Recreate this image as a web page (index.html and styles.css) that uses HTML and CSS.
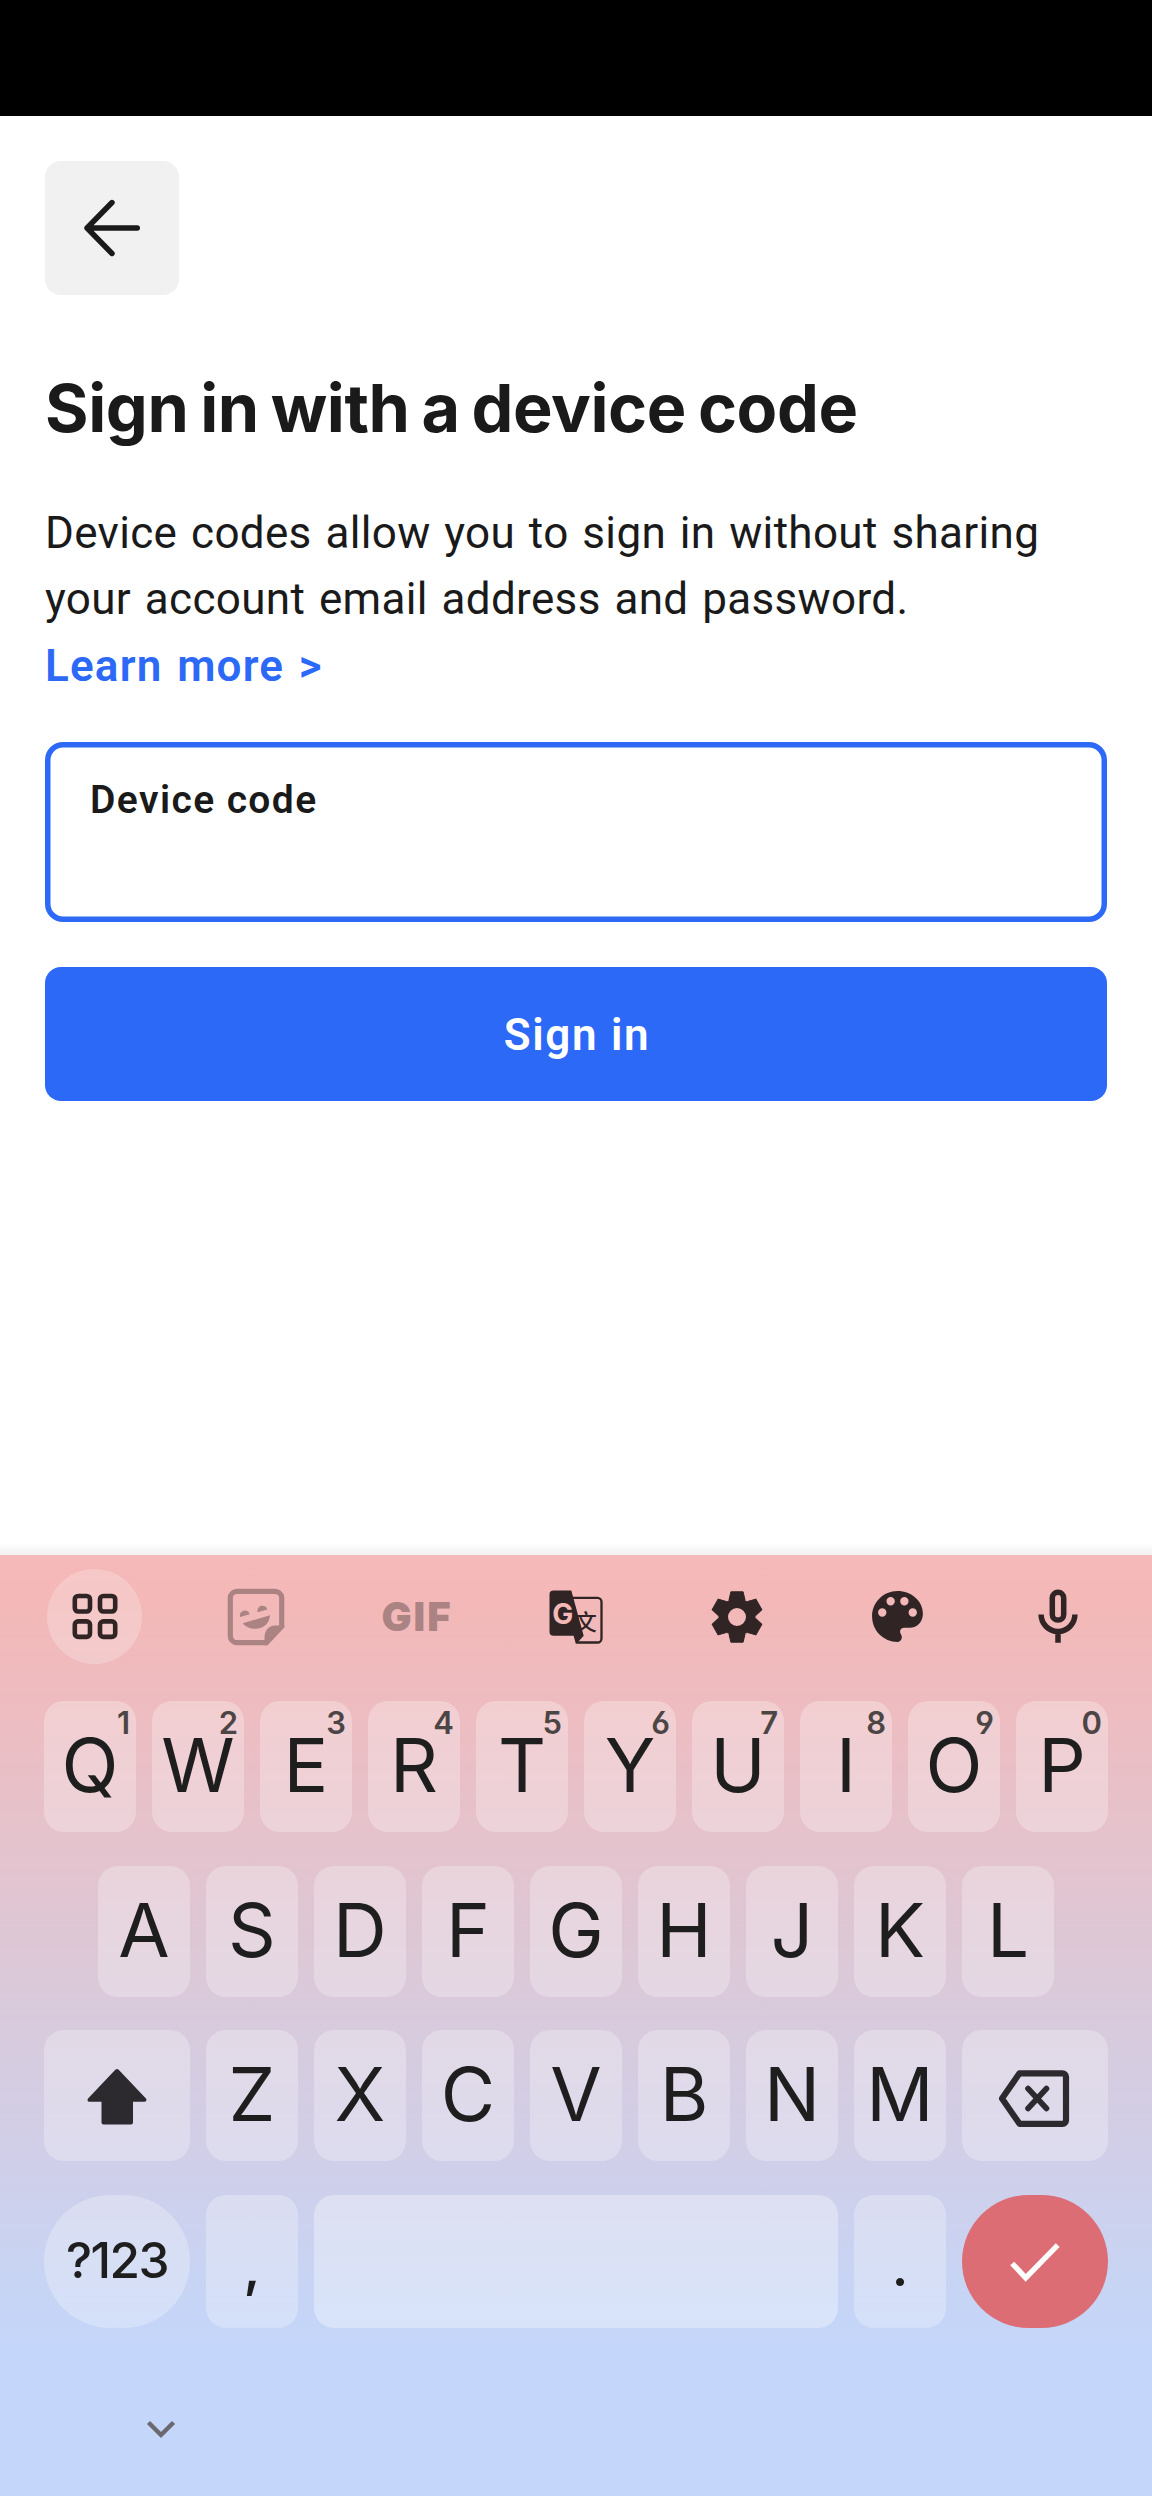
FILE: index.html
```html
<!DOCTYPE html>
<html lang="en">
<head>
<meta charset="utf-8">
<title>Sign in with a device code</title>
<link rel="stylesheet" href="styles.css">
</head>
<body>
<div class="status"></div>

<main class="page">
  <button class="back" aria-label="Back">
    <svg width="64" height="64" viewBox="-32 -32 64 64" fill="none" stroke="#1a1a1a" stroke-width="5.4" stroke-linecap="round" stroke-linejoin="round"><path d="M0-25.5-25 0 0 25.5M-25 0H25.300"/></svg>
  </button>
  <h1 class="title">Sign in with a device code</h1>
  <p class="copy">Device codes allow you to sign in without sharing<br>your account email address and password.<br><a class="link">Learn more &gt;</a></p>
  <div class="field"><label class="label">Device code</label></div>
  <button class="submit">Sign in</button>
</main>

<section class="keyboard">
  <div class="tools">
    <div class="tool tool-apps">
      <svg width="60" height="60" viewBox="0 0 60 60" fill="none" stroke="#302424" stroke-width="4.6"><rect x="9.800" y="9" width="15.200" height="15.500" rx="3.400"/><rect x="35" y="9" width="15.200" height="15.500" rx="3.400"/><rect x="9.800" y="34.400" width="15.200" height="15.500" rx="3.400"/><rect x="35" y="34.400" width="15.200" height="15.500" rx="3.400"/></svg>
    </div>
    <div class="tool">
      <svg width="60" height="60" viewBox="-1 0 60 60" fill="#ab8383"><path d="M41 55.700H11a6.700 6.700 0 0 1-6.700-6.700V11A6.700 6.700 0 0 1 11 4.300H49A6.700 6.700 0 0 1 55.700 11V40" fill="none" stroke="#ab8383" stroke-width="5.200"/><path d="M58.300 40.500 41.600 58.200H38.500V50C38.500 43.500 43 38.500 49 38.500H58.300Z"/><path d="M14 30A5 5.100 0 1 1 23.700 27.200Z"/><path d="M31.600 25.200A5 5.100 0 1 1 41.300 22.400Z"/><path d="M16.700 36.200 44 28.200C43.600 36 37.500 41.700 29.500 41.700 24 41.700 19.300 39.700 16.700 36.200Z"/></svg>
    </div>
    <div class="tool gif">GIF</div>
    <div class="tool">
      <svg width="60" height="60" viewBox="0 0 60 60"><path d="M26 10.800H51.500A4 4 0 0 1 55.500 14.800V51.500A4 4 0 0 1 51.500 55.500H31" fill="none" stroke="#302424" stroke-width="2.300"/><path d="M7.500 3.500H25.300L37.700 48.700 30 57.200 27.600 48.700H7.500A4 4 0 0 1 3.500 44.700V7.500A4 4 0 0 1 7.500 3.500Z" fill="#302424"/><text class="glyph-g" x="16.800" y="36.500" text-anchor="middle">G</text><text class="glyph-cjk" x="39.800" y="42.500" text-anchor="middle">文</text></svg>
    </div>
    <div class="tool">
      <svg width="60" height="60" viewBox="-30 -30 60 60" fill="#302424"><defs><path id="cog" d="M-8-17-6.100-25.200H6.100L8-17Z" stroke="#302424" stroke-width="1" stroke-linejoin="round"/></defs><circle r="13.800" fill="none" stroke="#302424" stroke-width="9.600"/><use href="#cog"/><use href="#cog" transform="rotate(60)"/><use href="#cog" transform="rotate(120)"/><use href="#cog" transform="rotate(180)"/><use href="#cog" transform="rotate(240)"/><use href="#cog" transform="rotate(300)"/></svg>
    </div>
    <div class="tool">
      <svg width="61" height="61" viewBox="0 0 24 24" fill="#302424"><path fill-rule="evenodd" d="M12 22C6.490 22 2 17.510 2 12S6.490 2 12 2s10 4 10 8.900c0 3.100-2.200 5.500-5.200 5.500h-2.100c-1 0-1.700.600-1.700 1.500 0 .900.700 1.300.700 2.200C13.700 21.200 13 22 12 22zM6 12.100a1.650 1.650 0 1 0 0-3.300 1.650 1.650 0 0 0 0 3.300zM9.300 7.650a1.650 1.650 0 1 0 0-3.300 1.650 1.650 0 0 0 0 3.300zM14.700 7.650a1.650 1.650 0 1 0 0-3.300 1.650 1.650 0 0 0 0 3.300zM18 12.100a1.650 1.650 0 1 0 0-3.300 1.650 1.650 0 0 0 0 3.300z"/></svg>
    </div>
    <div class="tool">
      <svg width="60" height="60" viewBox="-30 -2.500 60 60" fill="none" stroke="#302424" stroke-width="5.500"><rect x="-5.700" y="2.700" width="11.400" height="27.900" rx="5.700"/><path d="M-16.900 25A16.900 16.900 0 0 0 16.900 25M0 42V53.300"/></svg>
    </div>
  </div>

  <div class="rows">
    <div class="row">
      <div class="key">Q<sup>1</sup></div><div class="key">W<sup>2</sup></div><div class="key">E<sup>3</sup></div><div class="key">R<sup>4</sup></div><div class="key">T<sup>5</sup></div><div class="key">Y<sup>6</sup></div><div class="key">U<sup>7</sup></div><div class="key">I<sup>8</sup></div><div class="key">O<sup>9</sup></div><div class="key">P<sup>0</sup></div>
    </div>
    <div class="row">
      <div class="key">A</div><div class="key">S</div><div class="key">D</div><div class="key">F</div><div class="key">G</div><div class="key">H</div><div class="key">J</div><div class="key">K</div><div class="key">L</div>
    </div>
    <div class="row">
      <div class="key wide"><svg width="64" height="64" viewBox="-32 -32 64 64" fill="#2d2a2f" stroke="#2d2a2f" stroke-width="4" stroke-linejoin="round"><path d="M0-25-27.500 3.800H-13.500V26.500H14V3.800H27.500Z"/></svg></div>
      <div class="key">Z</div><div class="key">X</div><div class="key">C</div><div class="key">V</div><div class="key">B</div><div class="key">N</div><div class="key">M</div>
      <div class="key wide"><svg width="76" height="64" viewBox="-38 -32 76 64" fill="none" stroke="#2d2a2f" stroke-width="6.200" stroke-linejoin="round"><path d="M-15.500-22.700H27.500A3.500 3.500 0 0 1 31 -19.200V24.300A3.500 3.500 0 0 1 27.500 27.800H-15.500L-33 2.500Z"/><path d="M-7-7.500 11.500 12.500M11.500-7.500-7 12.500" stroke-width="5.600" stroke-linecap="round"/></svg></div>
    </div>
    <div class="row row-last">
      <div class="key wide round mode">?123</div>
      <div class="key mark">,</div>
      <div class="key space"></div>
      <div class="key mark">.</div>
      <div class="key wide round enter"><svg width="60" height="60" viewBox="-30 -30 60 60" fill="none" stroke="#fff" stroke-width="5.400"><path d="M-22.800 2.500-9.300 16.800 22.700-15.800"/></svg></div>
    </div>
  </div>
  <div class="nav"><svg width="40" height="30" viewBox="-20 -15 40 30" fill="none" stroke="#6a6a6e" stroke-width="4.400"><path d="M-12.500-6.500 0 6 12.500-6.500"/></svg></div>
</section>
</body>
</html>
```
FILE: styles.css
```css
* { box-sizing: border-box; }
body {
  margin: 0;
  width: 1152px;
  height: 2496px;
  overflow: hidden;
  display: flex;
  flex-direction: column;
  background: #fff;
  color: #1a1a1a;
  font-family: Roboto, "Liberation Sans", sans-serif;
}
button { border: 0; padding: 0; font: inherit; }
svg { display: block; flex: none; }

.status { height: 116px; background: #000; flex: none; }

.page {
  height: 1439px;
  flex: none;
  padding: 45px 45px 0;
  display: flex;
  flex-direction: column;
  background: linear-gradient(#fff, #fff calc(100% - 12px), #f1f1f1);
}
.back {
  width: 134px;
  height: 134px;
  border-radius: 16px;
  background: #f1f1f1;
  display: flex;
  align-items: center;
  justify-content: center;
}
.title {
  margin: 73px 0 0;
  font: 700 66.5px/80px Inter, sans-serif;
  letter-spacing: -.4px;
  word-spacing: -3.500px;
  white-space: nowrap;
}
.copy {
  margin: 51.5px 0 0;
  font-size: 44px;
  line-height: 66.5px;
  letter-spacing: .33px;
  word-spacing: 2.500px;
  white-space: nowrap;
}
.link { color: #2b69f6; font-weight: 600; letter-spacing: 1.200px; }
.field {
  margin-top: 42.500px;
  height: 180.500px;
  box-shadow: inset 0 0 0 5.500px #2b69f6;
  border-radius: 18px;
  padding: 35px 0 0 45px;
}
.label {
  display: block;
  font-size: 39px;
  line-height: 46px;
  font-weight: 600;
  letter-spacing: 1.400px;
}
.submit {
  margin-top: 44.500px;
  height: 134.500px;
  padding: 3px 0 0 2px;
  border-radius: 16px;
  background: #2b69f6;
  color: #fff;
  font-size: 44px;
  font-weight: 600;
  letter-spacing: 1.700px;
}

.keyboard {
  height: 941px;
  flex: none;
  padding: 14px 44px 0;
  display: flex;
  flex-direction: column;
  color: #1e1e1e;
  font-family: Inter, sans-serif;
  background: linear-gradient(#f4b9b8 0, #f3b8b7 45px, #eebcc0 145px, #e4c3cd 290px, #d9cadb 450px, #d0cfe9 610px, #c8d4f3 720px, #c4d6fa 795px);
}
.tools {
  height: 95px;
  display: flex;
  justify-content: space-between;
  align-items: center;
  padding: 0 3px;
}
.tool {
  width: 95px;
  height: 95px;
  display: flex;
  align-items: center;
  justify-content: center;
}
.tool-apps { border-radius: 50%; background: rgba(255, 255, 255, .23); }
.gif {
  padding-left: 3px;
  color: #ab8383;
  font-size: 40px;
  font-weight: 900;
  letter-spacing: 2px;
}
.glyph-g { font: 700 28px Inter, sans-serif; fill: #f3b8b7; }
.glyph-cjk { font: 500 22px "Noto Sans CJK SC", sans-serif; fill: #302424; }

.rows {
  margin-top: 37px;
  display: flex;
  flex-direction: column;
  gap: 33.600px;
}
.row {
  display: flex;
  justify-content: center;
  gap: 16px;
}
.key {
  position: relative;
  width: 92px;
  height: 131px;
  padding-bottom: 2px;
  border-radius: 20px;
  background: rgba(255, 255, 255, .27);
  display: flex;
  align-items: center;
  justify-content: center;
  font-size: 74.500px;
  line-height: 127px;
}
.key sup {
  position: absolute;
  top: 5px;
  right: 6px;
  font-size: 31px;
  line-height: 34px;
  font-weight: 600;
  color: #4c4545;
  font-feature-settings: "cv03", "cv04";
}
.wide { width: 146px; padding-bottom: 0; }
.row-last .key { height: 133px; }
.round { border-radius: 67px; }
.row-last .mode { font-size: 49.500px; font-weight: 500; letter-spacing: -1.500px; padding-bottom: 1px; }
.row-last .mark { font-size: 52px; font-weight: 600; padding: 13px 0 0; line-height: 120px; }
.space { width: 524px; background: rgba(255, 255, 255, .33); }
.enter { background: #dc6d74; }
.nav { margin: 86.500px 0 0 97px; }
```
